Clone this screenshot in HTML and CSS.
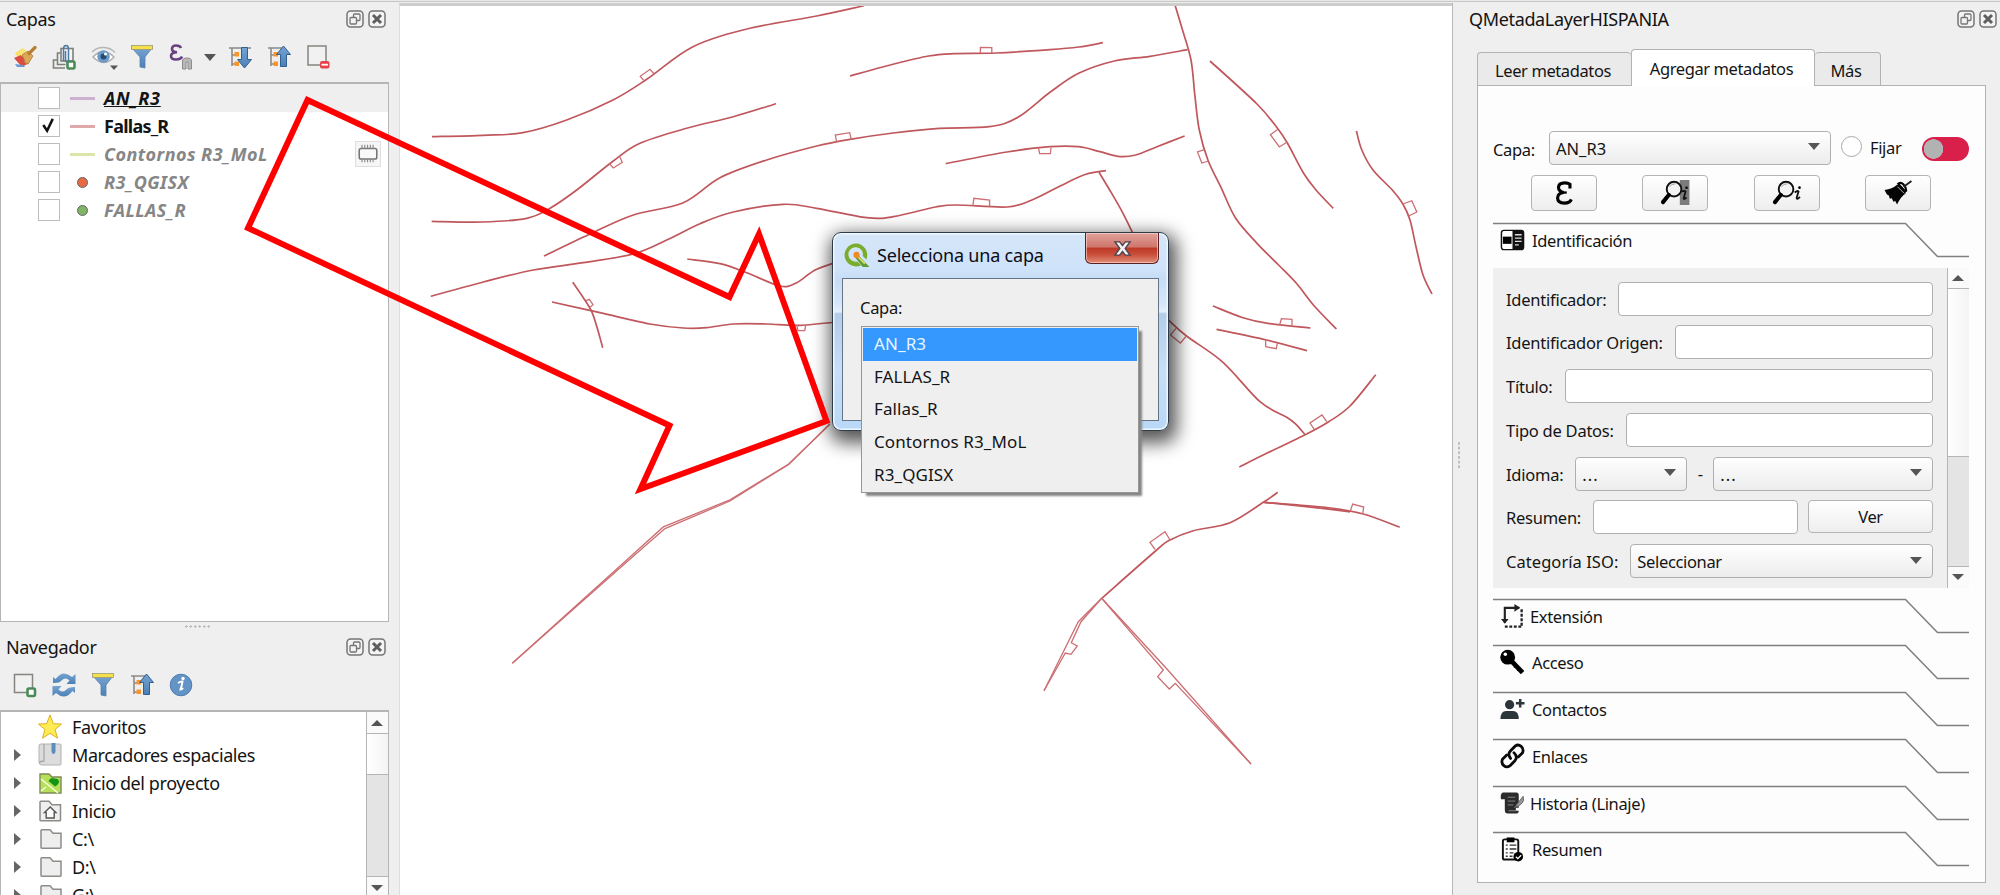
FILE: index.html
```html
<!DOCTYPE html>
<html lang="es">
<head>
<meta charset="utf-8">
<title>QMetadaLayerHISPANIA</title>
<link rel="stylesheet" href="styles.css">
</head>
<body>
<svg class="defs" width="0" height="0">
  <defs>
    <linearGradient id="blue" x1="0" y1="0" x2="0" y2="1"><stop offset="0" stop-color="#76a3d2"/><stop offset="1" stop-color="#4b80b6"/></linearGradient>
  </defs>
  <symbol id="float" viewBox="0 0 18 18"><rect x="1" y="1" width="16" height="16" rx="3.5" fill="#f3f3f3" stroke="#757575" stroke-width="1.5"/><rect x="7.5" y="4" width="6.5" height="6.5" rx="1" fill="none" stroke="#757575" stroke-width="1.3"/><rect x="4" y="7.5" width="6.5" height="6.5" rx="1" fill="#f3f3f3" stroke="#757575" stroke-width="1.3"/></symbol>
  <symbol id="close" viewBox="0 0 18 18"><rect x="1" y="1" width="16" height="16" rx="3.5" fill="#f3f3f3" stroke="#757575" stroke-width="1.5"/><path d="M5 5l8 8M13 5l-8 8" stroke="#5e5e5e" stroke-width="3"/></symbol>
  <symbol id="funnel" viewBox="0 0 24 26"><path d="M2 4h20l-7 9v11l-5-1V13z" fill="url(#blue)" stroke="#5a82ab" stroke-width=".8"/><rect x="1.5" y="1.5" width="21" height="4" fill="#f5e04c" stroke="#9a9a78" stroke-width=".8"/></symbol>
  <symbol id="collapse" viewBox="0 0 24 26"><path d="M1 4h17M4 4v18M4 11h4M4 20h4" fill="none" stroke="#8b8b8b" stroke-width="1.6"/><rect x="6.500" y="8" width="4.500" height="4.500" fill="#ff9326"/><rect x="6.500" y="17.500" width="4.500" height="4.500" fill="#ff9326"/><path d="M16.500 2l7 8.500h-4v12h-6v-12h-4z" fill="url(#blue)" stroke="#315f8f"/></symbol>
  <symbol id="expand" viewBox="0 0 24 26"><path d="M1 4h22M4 4v18M4 11h4M4 20h4" fill="none" stroke="#8b8b8b" stroke-width="1.6"/><rect x="6.500" y="8" width="4.500" height="4.500" fill="#ff9326"/><rect x="6.500" y="17.500" width="4.500" height="4.500" fill="#ff9326"/><path d="M16.500 24l7-8.500h-4v-12h-6v12h-4z" fill="url(#blue)" stroke="#315f8f"/></symbol>
  <symbol id="folder" viewBox="0 0 22 20"><path d="M1 18.500V1.500Q1 .8 1.800.8H10l3 3.500h8v14.200q0 .7-.8.700H1.800Q1 19.200 1 18.500z" fill="#eee" stroke="#8c8c88" stroke-width="1.500"/></symbol>
  <symbol id="lens" viewBox="0 0 24 26"><circle cx="14" cy="9.500" r="7.600" fill="#f3f3f3" stroke="#111" stroke-width="2"/><path d="M9.500 7q2-3.500 6-3" fill="none" stroke="#999" stroke-width="1"/><path d="M8.500 15.500l-6 7.500" stroke="#000" stroke-width="4.200" stroke-linecap="round"/></symbol>
  <symbol id="fold-line" viewBox="0 0 476 36"><path d="M0 1.500H412.500L444.500 34.500H476" fill="none" stroke="#808080" stroke-width="1.500"/></symbol>
</svg>

<div class="app">
  <aside class="dock-left">
    <section class="panel layers-panel">
      <header class="dock-title"><span>Capas</span><svg><use href="#float"/></svg><svg><use href="#close"/></svg></header>
      <div class="toolbar">
        <svg class="ico" viewBox="0 0 24 26"><path d="M2 9l8-5 5 8-9 4z" fill="#f8e06a"/><path d="M1 14l7-3 8 8-7 4z" fill="#dd4b42"/><path d="M5 9l7-4 5 9-3 2z" fill="#f8e37a"/><path d="M2 20l8 1 2 2H4z" fill="#6a9ad4"/><path d="M9 11l6-4 5 5-5 8-3-1q-1-5-3-8z" fill="#dba85a" stroke="#a97b31" stroke-width=".8"/><path d="M16 9.500l6-6" stroke="#b87f33" stroke-width="3.200" stroke-linecap="round"/></svg>
        <svg class="ico" viewBox="0 0 24 26"><path d="M5 16H1.500v8H13" fill="none" stroke="#7f7f7a" stroke-width="1.600"/><path d="M8.500 9H5.500v11.500h8" fill="none" stroke="#7f7f7a" stroke-width="1.600"/><rect x="9" y="4.500" width="12" height="12.500" fill="#f4f4f4" stroke="#7f7f7a" stroke-width="1.600"/><path d="M11.500 17V5q0-3.500 2.500-3.500T16.500 5v11q0 2-1.500 2t-1.500-2V7" fill="none" stroke="#4d7ba8" stroke-width="1.500"/><rect x="15.500" y="17.500" width="7" height="7" rx="1.500" fill="#fff" stroke="#4a8b58" stroke-width="2.600"/></svg>
        <svg class="ico wide" viewBox="0 0 27 26"><path d="M1 8q5-5 12-4.500t11 5" fill="none" stroke="#b5b5b5" stroke-width="1.500"/><path d="M2 13q10-11 21 0q-10 11-21 0z" fill="#fff" stroke="#aaa" stroke-width="1.300"/><circle cx="12.500" cy="12.500" r="6.300" fill="#6d9bc8"/><circle cx="12.500" cy="12.500" r="3" fill="#264b72"/><circle cx="14.500" cy="10" r="1.500" fill="#fff"/><path d="M19 21.500h8l-4 4.500z" fill="#555"/></svg>
        <svg class="ico"><use href="#funnel"/></svg>
        <svg class="ico" viewBox="0 0 24 26"><path d="M12 4q-1-2.500-5-2.500T3 5q0 3 5 3.200Q2 8.400 2 12t5 3.500 6-3" fill="none" stroke="#6b4080" stroke-width="2.600"/><path d="M13.500 25V17q0-3 4.500-3t4.500 3v8h-3.500v-7h-2v7z" fill="#b9b9b9" stroke="#8b8b8b"/></svg>
        <i class="caret tool-caret"></i>
        <svg class="ico"><use href="#expand"/></svg>
        <svg class="ico"><use href="#collapse"/></svg>
        <svg class="ico" viewBox="0 0 24 26"><rect x="2" y="2" width="18" height="19" fill="#f1f1f1" stroke="#85857f" stroke-width="1.500"/><rect x="14" y="17" width="9.500" height="7.500" rx="2" fill="#e8434c"/><path d="M15.500 20.700h6.500" stroke="#fff" stroke-width="1.800"/></svg>
      </div>
      <div class="layer-tree">
        <div class="layer current"><i class="check"></i><i class="line-sym violet"></i><span>AN_R3</span></div>
        <div class="layer on"><i class="check"><svg viewBox="0 0 20 20"><path d="M4.500 9.500l4 6L14.500 3" fill="none" stroke="#111" stroke-width="2.600"/></svg></i><i class="line-sym rose"></i><span>Fallas_R</span></div>
        <div class="layer off"><i class="check"></i><i class="line-sym lime"></i><span>Contornos R3_MoL</span><i class="chip"><svg viewBox="0 0 26 26"><rect x="3.500" y="7" width="19" height="11.500" rx="2" fill="#fafafa" stroke="#777" stroke-width="1.700"/><path d="M6.500 3v4M9.500 3v4M12.500 3v4M15.500 3v4M18.500 3v4M6.500 18.500V22M9.500 18.500V22M12.500 18.500V22M15.500 18.500V22M18.500 18.500V22" stroke="#888" stroke-width="1.200"/></svg></i></div>
        <div class="layer off"><i class="check"></i><i class="dot-sym red"></i><span>R3_QGISX</span></div>
        <div class="layer off"><i class="check"></i><i class="dot-sym green"></i><span>FALLAS_R</span></div>
      </div>
    </section>
    <div class="grip-h"></div>
    <section class="panel browser-panel">
      <header class="dock-title"><span>Navegador</span><svg><use href="#float"/></svg><svg><use href="#close"/></svg></header>
      <div class="toolbar">
        <svg class="ico" viewBox="0 0 24 26"><rect x="1.500" y="2.500" width="18" height="18" fill="#f1f1f1" stroke="#85857f" stroke-width="1.500"/><rect x="14.500" y="16.500" width="7.500" height="7.500" rx="1.500" fill="#fff" stroke="#4a8b58" stroke-width="2.600"/></svg>
        <svg class="ico" viewBox="0 0 24 26"><path d="M1 11V5l2.500 2Q11-3 20 5l3.500-3v10h-9l3-3.500q-4-4-8 0Q8 11 1 11z" fill="url(#blue)"/><path d="M23 15v6l-2.500-2Q13 29 4 21l-3.500 3V14h9l-3 3.500q4 4 8 0Q16 15 23 15z" fill="url(#blue)"/></svg>
        <svg class="ico"><use href="#funnel"/></svg>
        <svg class="ico"><use href="#collapse"/></svg>
        <svg class="ico" viewBox="0 0 24 26"><circle cx="12" cy="13" r="10.800" fill="#6493c5" stroke="#4d7fb4"/><path d="M9 11q3-2 4.500-1.500-.5 4-2 8 1.500 0 2.500-1.500" fill="none" stroke="#fff" stroke-width="2"/><circle cx="14" cy="6.500" r="1.700" fill="#fff"/></svg>
      </div>
      <div class="browser-box">
        <div class="browser-tree">
          <div class="node"><i></i><svg viewBox="0 0 24 26"><path d="M12 1l3.300 8.700 8.200.3-6.400 5.500 2.400 8.700L12 19.300l-7.500 4.900 2.400-8.700L.5 10l8.200-.3z" fill="#ffec54" stroke="#dcb01e"/></svg><span>Favoritos</span></div>
          <div class="node"><i class="arrow"></i><svg viewBox="0 0 24 26"><path d="M3 2h19q1 0 1 1v19q0 1-1 1H4q-3 0-3-3V4q0-2 2-2z" fill="#dcdcdc" stroke="#b2b2b2"/><path d="M6 2v17q-4 0-4.500 2" fill="none" stroke="#aaa" stroke-width="1.300"/><path d="M13.500 1h4v9q-2 4-4 0z" fill="#5d8dbe"/></svg><span>Marcadores espaciales</span></div>
          <div class="node"><i class="arrow"></i><svg viewBox="0 0 24 26"><path d="M2 4h9l3 3h9v16H2z" fill="#b7e05a" stroke="#7c8a58" stroke-width="1.400"/><path d="M3 9l17 14M8 17l-5 4" stroke="#f4ffd8" stroke-width="1.500"/><path d="M10.500 11q2-4 6-2.500 5 0 4.500 4-1.500 3-4 4z" fill="#149414"/></svg><span>Inicio del proyecto</span></div>
          <div class="node"><i class="arrow"></i><svg viewBox="0 0 24 26"><path d="M2 22V4q0-.7.700-.7H11l3 3.500h8.500V22q0 .8-.8.800H2.700Q2 22.800 2 22z" fill="#eee" stroke="#8c8c88" stroke-width="1.500"/><path d="M6.500 14.500l5.700-5.500 5.700 5.500h-1.700v5.500H8.200v-5.500z" fill="#fafafa" stroke="#555" stroke-width="1.400"/></svg><span>Inicio</span></div>
          <div class="node"><i class="arrow"></i><svg class="folder"><use href="#folder"/></svg><span>C:\</span></div>
          <div class="node"><i class="arrow"></i><svg class="folder"><use href="#folder"/></svg><span>D:\</span></div>
          <div class="node"><i class="arrow"></i><svg class="folder"><use href="#folder"/></svg><span>G:\</span></div>
        </div>
        <div class="scrollbar"><b class="step"><i class="up"></i></b><b class="thumb"></b><b class="trough"></b><b class="step"><i class="down"></i></b></div>
      </div>
    </section>
  </aside>

  <main class="map">
    <svg id="faults" viewBox="400 6 1052 889"></svg>
    <div class="dialog">
      <div class="dialog-title">
        <svg class="qgis" viewBox="0 0 26 26"><path d="M12.500 1.500a11 11 0 1 0 5 20.800l-3.800-3.500a7 7 0 1 1 5.300-5.300l3.500 3.300A11 11 0 0 0 12.500 1.500z" fill="#7aad2c"/><path d="M13 11l12.500 13H19L11 14z" fill="#5f9c38"/><path d="M14 14l7 7" stroke="#e8e45a" stroke-width="1.500"/><circle cx="13" cy="12.500" r="3" fill="#f08a24"/></svg>
        <span>Selecciona una capa</span>
        <div class="dialog-close"><svg viewBox="0 0 20 18"><path d="M2 2h5l3 4 3-4h5l-5.200 7L18 16h-5l-3-4-3 4H2l5.200-7z" fill="#f4f4f4" stroke="#4f4650" stroke-width="1.500"/></svg></div>
      </div>
      <div class="dialog-body"><span>Capa:</span></div>
      <ul class="popup"><li class="sel">AN_R3</li><li>FALLAS_R</li><li>Fallas_R</li><li>Contornos R3_MoL</li><li>R3_QGISX</li></ul>
    </div>
  </main>

  <aside class="dock-right">
    <i class="grip-v"></i>
    <header class="dock-title"><span>QMetadaLayerHISPANIA</span><svg><use href="#float"/></svg><svg><use href="#close"/></svg></header>
    <nav class="tabs"><div class="tab t1">Leer metadatos</div><div class="tab t2 active">Agregar metadatos</div><div class="tab t3">Más</div></nav>
    <div class="pane">
      <div class="capa-row"><label>Capa:</label><div class="select capa-select">AN_R3<i class="caret"></i></div><i class="radio"></i><label class="fijar">Fijar</label><i class="toggle"></i></div>
      <div class="button-row">
        <button><svg viewBox="0 0 24 26"><path d="M18.500 8V3.500q-2-1.500-5.500-1.500-7 0-7 5 0 4 5.500 5.500Q5 13.500 5 18.500 5 24 12.500 24q6 0 7.500-4" fill="none" stroke="#000" stroke-width="3.400"/><path d="M10 12.500h5" stroke="#000" stroke-width="2.500"/></svg></button>
        <button><svg class="lens" viewBox="0 0 30 26"><rect x="20" y="0" width="10" height="26" fill="#7c7c7c"/><use href="#lens" width="24" height="26"/><path d="M22 12q3-1.500 4 0l-2 7q0 2 3-1" fill="none" stroke="#111" stroke-width="1.800"/><circle cx="27" cy="8" r="1.300"/></svg></button>
        <button><svg class="lens" viewBox="0 0 30 26"><use href="#lens" width="24" height="26"/><path d="M23 13q3-2.500 4-1l-2 6.500q0 2.500 3.500-1" fill="none" stroke="#111" stroke-width="1.900"/><circle cx="28" cy="8" r="1.400"/></svg></button>
        <button><svg class="lens" viewBox="0 0 30 26"><path d="M1 10.500q8-1 13-5.500l9 9q-5 3-9 11.500l-2-4-1.500 1.500-2-4-2 .5-1-3.500-2-1z" fill="#050505"/><path d="M14.500 4.500q3-3 6 0t3 7.500" fill="none" stroke="#050505" stroke-width="2.200"/><path d="M15 4.500l8 8.500" stroke="#050505" stroke-width="3"/><path d="M14.500 7l7 7" stroke="#ddd" stroke-width=".8"/><path d="M21 7l8-6" stroke="#222" stroke-width="2"/></svg></button>
      </div>
      <div class="fold first"><svg class="edge"><use href="#fold-line"/></svg><svg class="fi" viewBox="0 0 26 26"><rect x="1.500" y="3" width="23" height="20" rx="2.500" fill="#fff" stroke="#111" stroke-width="1.500"/><path d="M13 3h9.500q2 0 2 2v16q0 2-2 2H13z" fill="#111"/><rect x="3" y="9.500" width="9" height="7.500"/><path d="M15.500 7.500h7M15.500 11h7M15.500 14.500h7M15.500 18h4" stroke="#ddd" stroke-width="1.400"/></svg><span>Identificación</span></div>
      <div class="form-box">
        <div class="form">
          <div class="row"><label>Identificador:</label><i class="input"></i></div>
          <div class="row"><label>Identificador Origen:</label><i class="input"></i></div>
          <div class="row"><label>Título:</label><i class="input"></i></div>
          <div class="row"><label>Tipo de Datos:</label><i class="input"></i></div>
          <div class="row"><label>Idioma:</label><div class="select lang">...<i class="caret"></i></div><span class="dash">-</span><div class="select fill">...<i class="caret"></i></div></div>
          <div class="row"><label>Resumen:</label><i class="input"></i><button class="ver">Ver</button></div>
          <div class="row iso"><label>Categoría ISO:</label><div class="select fill">Seleccionar<i class="caret"></i></div></div>
        </div>
        <div class="scrollbar"><b class="step"><i class="up"></i></b><b class="thumb"></b><b class="trough"></b><b class="step"><i class="down"></i></b></div>
      </div>
      <div class="folds">
        <div class="fold near"><svg class="edge"><use href="#fold-line"/></svg><svg class="fi" viewBox="0 0 26 26"><path d="M5 20V4.500h15" fill="none" stroke="#222" stroke-width="2.200"/><path d="M1 16h8l-4 5z M15 .5v8l6-4z" fill="#222"/><path d="M22.500 6v18M5 24h18" fill="none" stroke="#222" stroke-width="2.400" stroke-dasharray="3 1.700"/></svg><span>Extensión</span></div>
        <div class="fold"><svg class="edge"><use href="#fold-line"/></svg><svg class="fi" viewBox="0 0 26 26"><path d="M10 10l13.500 14" stroke="#000" stroke-width="5"/><path d="M17 16l-2 3M21 19l-3 3" stroke="#000" stroke-width="2"/><circle cx="8" cy="8" r="7.700"/><circle cx="5.500" cy="5" r="1.800" fill="#fff"/></svg><span>Acceso</span></div>
        <div class="fold"><svg class="edge"><use href="#fold-line"/></svg><svg class="fi" viewBox="0 0 26 26"><g fill="#2c3539"><circle cx="10" cy="8.500" r="4.800"/><path d="M.5 23.500q0-8.500 6-8.500h7q6 0 6 8.500z"/></g><path d="M21 2.500v9M16.500 7h9" stroke="#2c3539" stroke-width="2.600"/></svg><span>Contactos</span></div>
        <div class="fold"><svg class="edge"><use href="#fold-line"/></svg><svg class="fi" viewBox="0 0 26 26"><g fill="none" stroke="#0a0a0a" stroke-width="2.900" stroke-linecap="round"><path d="M11 15.500Q7.500 11 11 7.500L16 2.500q3-2 6 .5t1.500 6.500L19 14"/><path d="M14.500 9.500q4.500 4.500 1 8.500l-5 5q-3.500 2.500-6.500 0t-1.500-6.500L7 12"/></g></svg><span>Enlaces</span></div>
        <div class="fold near"><svg class="edge"><use href="#fold-line"/></svg><svg class="fi" viewBox="0 0 26 26"><path d="M3 2h14q2.500 0 2.500 3v13h-3v3h3q0 3-3 3H8q-3 0-3-4V9H1Q0 3 3 2z" fill="#2b2b2b"/><path d="M8 7h8M8 11h8M8 15h6M9 21h8" stroke="#888" stroke-width="1"/><path d="M15 18L24 6q2 5-2 8-3 3-6 3z" fill="#999" stroke="#666"/></svg><span>Historia (Linaje)</span></div>
        <div class="fold"><svg class="edge"><use href="#fold-line"/></svg><svg class="fi" viewBox="0 0 26 26"><rect x="3" y="3" width="16" height="21" rx="2" fill="#fff" stroke="#111" stroke-width="2"/><path d="M7 1h8v5H7z"/><path d="M6 9h2M10 9h7M6 13h2M10 13h7M6 17h2M10 17h4M6 20.500h2M10 20.500h3" stroke="#333" stroke-width="1.400"/><circle cx="19" cy="21" r="5"/><path d="M16.500 21l2 2 3.500-3.500" fill="none" stroke="#fff" stroke-width="1.400"/></svg><span>Resumen</span></div>
      </div>
    </div>
  </aside>
</div>
<svg class="callout" viewBox="0 0 2000 895"><path d="M307.500 100L729.500 297 759 234 826.500 421 640.500 489 669.500 425.500 248 228z" fill="none" stroke="#f00" stroke-width="6"/></svg>
<script src="map.js"></script>
</body>
</html>
```

FILE: styles.css
```css
* { box-sizing: border-box; }
body { margin: 0; background: #efefef; color: #141414; font: 17px "Noto Sans", sans-serif; letter-spacing: -0.1px; }
i, em { font-style: normal; }
.defs { position: absolute; }
.app { display: flex; width: 2000px; height: 895px; overflow: hidden; padding-top: 3px; background: linear-gradient(#e9e9e7 1px, #c6c6c6 1px, #c6c6c6 2px, #efefef 2px); }
svg { flex: none; display: block; }

/* docks */
.dock-left { width: 399px; flex: none; display: flex; flex-direction: column; }
.panel, .grip-h { flex: none; }
.dock-title { display: flex; align-items: center; height: 34px; padding: 0 13px 2px 6px; gap: 4px; font-size: 18px; letter-spacing: -0.35px; }
.dock-title span { flex: 1; }
.dock-title svg { width: 18px; height: 18px; margin-top: -1px; }
.toolbar { display: flex; align-items: center; gap: 15px; height: 46px; padding: 0 0 6px 13px; }
.ico { width: 24px; height: 26px; }
.ico.wide { width: 27px; margin-right: -3px; }
.caret { border: 6px solid transparent; border-top: 7px solid #555; border-bottom: 0; width: 0; height: 0; }
.tool-caret { margin: 0 -3px 0 -4px; }
.layer-tree { width: 389px; height: 540px; background: #fff; border: 1px solid #b5b5b5; border-top-width: 2px; margin-top: -1px; }
.layer { height: 28px; display: flex; align-items: center; padding-left: 37px; font-weight: bold; font-size: 18px; letter-spacing: -0.75px; }
.check { width: 22px; height: 22px; border: 1.500px solid #bdbdbd; background: #fff; }
.check svg { width: 19px; height: 19px; }
.current { background: #efefef; }
.current span { text-decoration: underline; font-style: italic; letter-spacing: 0.7px; }
.off span { color: #868686; font-style: italic; letter-spacing: 0.45px; }
.line-sym { width: 25px; height: 3px; margin: 0 9px 0 10px; }
.violet { background: #cdb0d2; } .rose { background: #e0a9a9; } .lime { background: #dbe6a9; }
.dot-sym { width: 11px; height: 11px; border-radius: 50%; border: 1.500px solid #666; margin: 0 16px 0 17px; }
.dot-sym.red { background: #e46b43; } .dot-sym.green { background: #81b566; }
.chip { width: 26px; height: 26px; margin-left: auto; margin-right: 7px; background: #f6f6f6; border: 1px solid #dedede; }
.chip svg { width: 24px; height: 24px; }
.grip-h { height: 7px; width: 27px; margin: 1px 0 0 184px; background: radial-gradient(circle, #b8b8b8 1px, transparent 1.300px) 0 0 / 4.500px 7px; }
.browser-panel .dock-title { padding-bottom: 0; }
.browser-panel .toolbar { height: 46px; padding-top: 2px; }
.browser-box { width: 389px; height: 200px; display: flex; background: #fff; border: 1px solid #b5b5b5; border-top-width: 2px; }
.browser-tree { flex: 1; padding-top: 1px; }
.node { display: flex; align-items: center; height: 28px; padding-left: 13px; font-size: 18px; letter-spacing: -0.4px; }
.node > i { width: 7px; margin-right: 17px; }
.node > i.arrow { width: 0; border: 6px solid transparent; border-left: 7px solid #666; border-right: 0; }
.node svg { width: 24px; height: 26px; margin-right: 10px; }
.node svg.folder { width: 22px; height: 20px; margin: 0 10px 0 2px; }
.scrollbar { width: 22px; display: flex; flex-direction: column; border-left: 1px solid #b5b5b5; background: #e4e4e4; }
.scrollbar b { display: flex; align-items: center; justify-content: center; padding-right: 2px; }
.step { height: 21px; background: #fafafa; }
.thumb { height: 42px; background: linear-gradient(90deg, #fff, #f4f4f4); border: 1px solid #b5b5b5; border-width: 1px 0; }
.trough { height: 102px; border-bottom: 1px solid #b5b5b5; }
.up { border: 6px solid transparent; border-bottom: 6px solid #555; border-top: 0; }
.down { border: 6px solid transparent; border-top: 6px solid #555; border-bottom: 0; }

/* map canvas */
.map { width: 1053px; flex: none; background: #fff; border-top: 3px solid #cdcdcd; border-left: 1px solid #ddd; position: relative; }
#faults { width: 1052px; height: 889px; fill: none; stroke: #c0575c; stroke-width: 1.700; }
#faults .thin { stroke-width: 1.300; stroke: #cc6e72; }
.callout { position: absolute; left: 0; top: 0; width: 2000px; height: 895px; pointer-events: none; }

/* layer dialog, floating over the canvas */
.dialog { position: absolute; left: 432px; top: 226px; width: 337px; height: 199px; border: 1.500px solid #2d3a48; border-radius: 9px; background: linear-gradient(#d5e6f8, #cfe3fa 18%, #c6dcf5 24%, #d6e6f8 36%, #e4effb 40%, #b3cce8 41%, #c7dff8 70%, #b9d8f7); box-shadow: inset 0 0 0 1.500px #eff7ff, 3px 7px 18px 5px rgba(0,0,0,.66); padding: 0 9px; }
.dialog-title { display: flex; align-items: center; height: 45px; padding-bottom: 1px; font-size: 18px; letter-spacing: -0.2px; color: #0c0c18; }
.qgis { width: 27px; height: 27px; margin-right: 7px; margin-left: 1px; }
.dialog-close { width: 74px; height: 31px; margin-left: auto; align-self: flex-start; border: 1.500px solid #5c2026; border-top: 0; border-radius: 0 0 6px 6px; background: linear-gradient(#dfa29b, #d0756b 47%, #bc3a27 50%, #c84c38 70%, #e18d78); box-shadow: inset 0 0 0 1px rgba(255,220,210,.6); display: flex; justify-content: center; align-items: center; }
.dialog-close svg { width: 19px; height: 17px; }
.dialog-body { height: 143px; margin-top: -0.500px; border: 1.500px solid #667585; background: #efefef; padding: 18px 17px; font-size: 16.500px; letter-spacing: -0.3px; line-height: 22px; }
.popup { position: absolute; left: 28px; top: 93px; width: 278px; height: 167px; margin: 0; padding: 1px; list-style: none; border: 1px solid #969696; background: #efefef; box-shadow: 4px 4px 2px -1px #858585; font-size: 17px; letter-spacing: .1px; }
.popup li { height: 32.700px; padding: 0 0 0 11px; line-height: 32.700px; }
.popup .sel { background: #3498ff; color: #e8f4ff; }

/* metadata dock */
.dock-right { flex: 1; border-left: 1.500px solid #b8b8b8; position: relative; padding-left: 24px; }
.dock-right .dock-title { margin-left: -24px; padding: 0 3px 2px 16px; }
.grip-v { position: absolute; left: 4px; top: 438px; width: 4px; height: 28px; background: radial-gradient(circle, #b8b8b8 1px, transparent 1.300px) 0 0 / 4px 4.700px; }
.tabs { display: flex; align-items: flex-end; height: 49px; margin-bottom: -1.500px; padding-top: 10px; position: relative; font-size: 16.500px; letter-spacing: -0.4px; }
.tab { height: 34px; border: 1.500px solid #b2b2b2; border-radius: 4px 4px 0 0; background: #eaeaea; text-align: center; line-height: 35px; padding-right: 3px; }
.t1 { width: 154px; border-right: 0; } .t3 { width: 66px; border-left: 0; }
.tab.active { width: 184px; height: 37px; background: #fff; border-bottom: 0; line-height: 37px; }
.pane { width: 509px; height: 798px; border: 1.500px solid #b2b2b2; background: #fdfdfd; padding: 45px 16px 0 15px; font-size: 16.500px; letter-spacing: -0.35px; }
.capa-row { display: flex; align-items: center; height: 34px; }
.capa-row label:first-child { width: 56px; padding-top: 3px; }
.select { display: flex; align-items: center; justify-content: space-between; height: 34px; border: 1.500px solid #b0b0b0; border-radius: 4px; background: linear-gradient(#fff, #ececec); padding: 1px 10px 0 6px; }
.select .caret { margin-top: -3px; }
.capa-select { width: 282px; letter-spacing: 0; }
.radio { width: 21px; height: 21px; border: 1.500px solid #aaa; border-radius: 50%; background: #fff; margin: -3px 8px 0 10px; }
.fijar { margin-top: -1px; }
.toggle { margin-left: auto; margin-top: 2px; width: 47px; height: 24px; border-radius: 12px; background: radial-gradient(circle at 11.500px 12px, #b2b2b2 9.500px, #d9204a 10px); }
.button-row { display: flex; justify-content: space-between; padding: 10px 38px 11px; }
button { width: 66px; height: 36px; border: 1.500px solid #b4b4b4; border-radius: 4px; background: linear-gradient(#fff, #eee); padding: 0; display: flex; align-items: center; justify-content: center; font: inherit; letter-spacing: inherit; color: inherit; }
button svg { width: 22px; height: 24px; }
button .lens { width: 30px; height: 25px; }
.fold { height: 46.800px; display: flex; align-items: flex-start; position: relative; padding: 5px 0 0 7px; gap: 7px; }
.fold.near { gap: 5px; }
.fold.first { height: 46px; }
.edge { position: absolute; left: 0; top: 0; width: 476px; height: 36px; }
.fi { width: 25px; height: 26px; }
.fold span { line-height: 26px; padding-top: 1px; }
.form-box { width: 476px; height: 320px; display: flex; background: #efefef; }
.form { flex: 1; padding: 14px 14px 0 13px; display: flex; flex-direction: column; gap: 9.750px; }
.row { display: flex; height: 34px; }
.row label { padding: 6px 12px 0 0; line-height: 24px; letter-spacing: -0.25px; }
.row.iso label { letter-spacing: 0.05px; }
.input { flex: 1; height: 34px; background: #fff; border: 1.500px solid #b0b0b0; border-radius: 4px; }
.fill { flex: 1; }
.lang { width: 112px; }
.lang, .lang ~ .select { letter-spacing: 1px; }
.dash { width: 26px; text-align: center; line-height: 34px; }
.ver { width: 125px; height: 33px; margin-left: 10px; }
.form-box .scrollbar .thumb { height: 169px; }
.form-box .scrollbar .trough { height: 110px; }
.folds { padding-top: 10px; }
```

FILE: map.js
```js
// Fault traces in canvas coordinates; each is drawn as a smooth curve.
const traces = [
  [432,136.7, 483,135.3, 523,132.7, 566.7,120, 613,100, 646.7,79.3, 693,46.7, 750,28.3, 816.7,16, 864,5.7],
  [431.7,221.3, 483,222, 526.7,218.3, 550,208.3, 576.7,190, 613.3,161, 640,143.3, 686.7,128.3, 733.3,116.7, 776,103.7],
  [544,256, 590,234, 633.3,215, 683.3,202.7, 720,177.7, 766.7,160, 816.7,146, 850,139.3, 893.3,133, 939.3,128.3, 989.3,126.7, 1017.9,117.3, 1050,92.3, 1078.6,73.3, 1114.3,61, 1150,56.3, 1187.5,49.7],
  [430.7,296.3, 483.3,282, 533.3,270, 583.3,262.7, 633.3,254, 666.7,240, 700,223.7, 733.3,212, 783.3,204.3, 816.7,208.3, 866.7,217.7, 893.3,216.7, 935.7,207, 957,205, 1007,207, 1032,200, 1060.7,185.7, 1085.7,174.3, 1106,170.7],
  [687.3,259, 720,263.7, 746.7,272.7, 780,286, 796.7,282.7, 816.7,269.3, 850,258],
  [552,302, 600,312.7, 650,324, 683.3,328, 706.7,327.7, 733.3,324, 766.7,324, 800,325.3, 845,321],
  [572.7,282.3, 583.3,297.7, 591.7,311.7, 597.3,328.3, 602.7,347.7],
  [850,76, 893,64.3, 928.6,56, 953.6,53.7, 996,53, 1050,49.7, 1078.6,47, 1102.9,42.7],
  [1175,5, 1182,28.3, 1191,60, 1195,96.7, 1199.3,130, 1207.9,160, 1221.4,188.3, 1235.7,218.3, 1257,243.3, 1278.6,265, 1296.4,283.3, 1314.3,306, 1336.4,329],
  [1210,61, 1257,104, 1277.5,128.3, 1287.5,143.3, 1303.6,173.3, 1316,190, 1333.2,208.3],
  [1356.4,131, 1361.8,150, 1373,170, 1392.9,190.7, 1402.9,204, 1410,220, 1416,246.7, 1423,275, 1432,294],
  [945.7,163.7, 1007,152, 1050,146.7, 1078.6,146.7, 1100,151.7, 1117.9,156.3, 1135.7,155, 1157,146.7, 1184.6,136],
  [1099,172.3, 1110.7,191.7, 1123,213.3, 1132,231.7, 1138,246],
  [1212.9,306, 1242.9,317.7, 1267.9,323.3, 1310.4,328],
  [1216.5,329.3, 1266.7,340, 1307,350.7],
  [1160,311, 1168.6,320, 1186.5,336, 1223,362.3, 1260,401.7, 1286.7,417.3, 1296,424.3, 1304.7,434.3],
  [1239.3,467, 1266.7,453.3, 1304.7,435, 1328.3,422, 1350,406, 1375.7,374.7],
  [1277.7,492.3, 1263.3,502.3, 1230,522.7, 1193.3,530.7, 1170,540, 1156.7,550, 1101.7,598.3],
  [1264.3,502.3, 1326.7,507.5, 1363.3,514, 1399.7,527.3],
  [1264.3,502.3, 1326.7,508.8, 1350,512]
];

// Straight-sided outlines: narrow fault polygons and the dip ticks.
const outlines = [
  [1101.7,598.3, 1078.3,621.7, 1044,690.7],
  [1101.7,598.3, 1081,621.7, 1071.3,642.7, 1077.3,646, 1071,654.3, 1065.3,653, 1044,690.7],
  [1101.7,598.3, 1166.7,668.8, 1251,764],
  [1101.7,598.3, 1163.3,670, 1157.7,676.7, 1169.3,689, 1175.3,683.3, 1251,764],
  [830,424, 788.7,464, 730,499.8, 663.3,526.9, 626.7,560, 512.3,663.3],
  [830,424, 788.7,464.5, 730,501, 665,528.6, 626.7,562, 512.3,663.3],
  [643.7,80.3, 640.3,76.3, 650,69.3, 654,73.7],
  [609,163.3, 613.3,168, 622.3,162.3, 619.3,156],
  [836.7,142.3, 835.3,135, 849.7,132.7, 851.3,139.3],
  [586,300.7, 589.3,299.3, 593,304.7, 590.3,307],
  [796.7,325.3, 798,330.7, 804.7,330.7, 805.7,325.3],
  [980.4,53, 980.4,47.3, 991.8,47.7, 991.8,53],
  [1204.3,149.7, 1197.5,152, 1201.8,163, 1208.6,161],
  [1277.9,129.3, 1270.4,134.7, 1279.3,147, 1286.8,142.3],
  [1402.9,204, 1411.8,200.7, 1416.8,212, 1408.6,216],
  [1038.6,148, 1039.6,153.7, 1050.4,153.7, 1051,147.7],
  [972.9,205.7, 973.9,198.3, 989.6,200, 989.6,206.3],
  [1279.6,325, 1281.4,318.7, 1292,319.3, 1292,325.7],
  [1265.7,340, 1265.7,346.7, 1276.3,348.7, 1277.3,343.3],
  [1176,328.3, 1170.4,335, 1180.4,343, 1186.4,336],
  [1314.3,429.3, 1310,423, 1322,415, 1326.7,421.7],
  [1155,549.3, 1150,542.3, 1165,531.7, 1170,540],
  [1350.3,511, 1352.7,504, 1363.7,507, 1362.7,514]
];

function smooth(v) {
  const p = [];
  for (let i = 0; i < v.length; i += 2) p.push([v[i], v[i + 1]]);
  let d = "M" + p[0];
  for (let i = 0; i < p.length - 1; i++) {
    const a = p[i - 1] || p[i], b = p[i], c = p[i + 1], e = p[i + 2] || c;
    d += "C" + [b[0] + (c[0] - a[0]) / 6, b[1] + (c[1] - a[1]) / 6,
      c[0] - (e[0] - b[0]) / 6, c[1] - (e[1] - b[1]) / 6, c[0], c[1]];
  }
  return d;
}

const canvas = document.getElementById("faults");
function add(d, cls) {
  const path = document.createElementNS("http://www.w3.org/2000/svg", "path");
  path.setAttribute("d", d);
  if (cls) path.setAttribute("class", cls);
  canvas.appendChild(path);
}
traces.forEach(t => add(smooth(t)));
outlines.forEach(t => add("M" + t.join(" "), "thin"));
```
